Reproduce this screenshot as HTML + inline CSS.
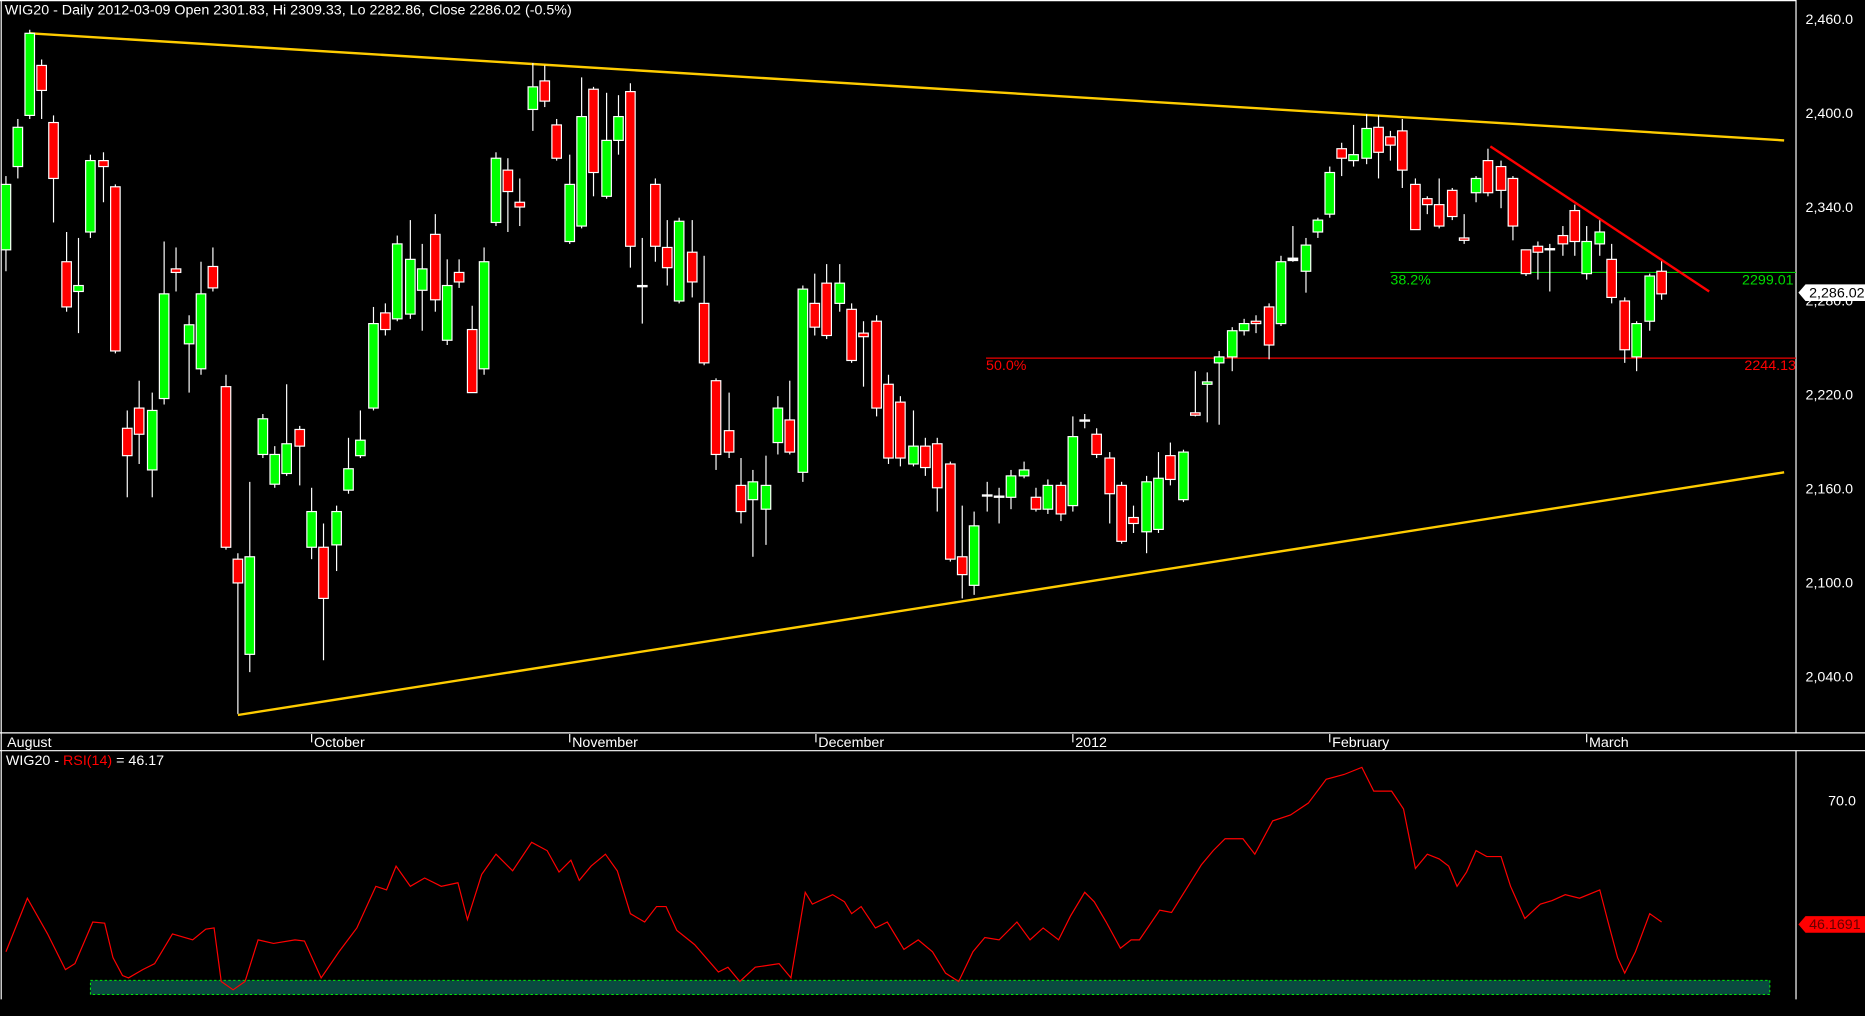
<!DOCTYPE html>
<html><head><meta charset="utf-8"><style>
html,body{margin:0;padding:0;background:#000;width:1865px;height:1016px;overflow:hidden}
svg{display:block}
text{font-family:"Liberation Sans",sans-serif}
</style></head><body>
<svg width="1865" height="1016" viewBox="0 0 1568 854" preserveAspectRatio="none" xmlns="http://www.w3.org/2000/svg">
<rect width="1568" height="854" fill="#000"/>
<g stroke="#fff" stroke-width="1" fill="none">
<line x1="1" y1="0" x2="1" y2="840"/>
<line x1="0" y1="0.5" x2="1510" y2="0.5"/>
<line x1="1510" y1="0" x2="1510" y2="616"/>
<line x1="0" y1="616" x2="1568" y2="616"/>
<line x1="0" y1="631" x2="1568" y2="631"/>
<line x1="1510" y1="631" x2="1510" y2="840"/>
<line x1="262" y1="617" x2="262" y2="624"/><line x1="479" y1="617" x2="479" y2="624"/><line x1="686" y1="617" x2="686" y2="624"/><line x1="902" y1="617" x2="902" y2="624"/><line x1="1118" y1="617" x2="1118" y2="624"/><line x1="1334" y1="617" x2="1334" y2="624"/>
</g>
<g font-size="12" fill="#fff">
<text x="4" y="12">WIG20 - Daily 2012-03-09 Open 2301.83, Hi 2309.33, Lo 2282.86, Close 2286.02 (-0.5%)</text>
<text x="6" y="628">August</text><text x="264" y="628">October</text><text x="481" y="628">November</text><text x="688" y="628">December</text><text x="904" y="628">2012</text><text x="1120" y="628">February</text><text x="1336" y="628">March</text>
<text x="1518" y="20">2,460.0</text><text x="1518" y="99">2,400.0</text><text x="1518" y="178">2,340.0</text><text x="1518" y="257">2,280.0</text><text x="1518" y="336">2,220.0</text><text x="1518" y="415">2,160.0</text><text x="1518" y="494">2,100.0</text><text x="1518" y="573">2,040.0</text>
<text x="1537" y="677">70.0</text>
<text x="5" y="643">WIG20 - <tspan fill="#ff0000">RSI(14)</tspan> = 46.17</text>
</g>
<!-- trend lines -->
<line x1="25" y1="28" x2="1500" y2="118" stroke="#ffcc00" stroke-width="2"/>
<line x1="200" y1="601" x2="1500" y2="397" stroke="#ffcc00" stroke-width="2"/>
<line x1="1169" y1="229" x2="1510" y2="229" stroke="#00cc00" stroke-width="1"/>
<line x1="829" y1="301" x2="1510" y2="301" stroke="#ee0000" stroke-width="1"/>
<text x="1169" y="239" font-size="12" fill="#00dd00">38.2%</text>
<text x="1508" y="239" font-size="12" fill="#00dd00" text-anchor="end">2299.01</text>
<text x="829" y="311" font-size="12" fill="#ff0000">50.0%</text>
<text x="1510" y="311" font-size="12" fill="#ff0000" text-anchor="end">2244.13</text>
<!-- candles -->
<g stroke="#fff" stroke-width="1">
<line x1="5" y1="148" x2="5" y2="228"/><rect x="1" y="155" width="8" height="55" fill="#00ff00"/>
<line x1="15" y1="100" x2="15" y2="150"/><rect x="11" y="107" width="8" height="33" fill="#00ff00"/>
<line x1="25" y1="25" x2="25" y2="100"/><rect x="21" y="28" width="8" height="69" fill="#00ff00"/>
<line x1="35" y1="50" x2="35" y2="100"/><rect x="31" y="55" width="8" height="21" fill="#ff0000"/>
<line x1="45" y1="97" x2="45" y2="187"/><rect x="41" y="103" width="8" height="47" fill="#ff0000"/>
<line x1="56" y1="195" x2="56" y2="262"/><rect x="52" y="220" width="8" height="38" fill="#ff0000"/>
<line x1="66" y1="200" x2="66" y2="280"/><rect x="62" y="240" width="8" height="5" fill="#00ff00"/>
<line x1="76" y1="130" x2="76" y2="200"/><rect x="72" y="135" width="8" height="60" fill="#00ff00"/>
<line x1="87" y1="128" x2="87" y2="170"/><rect x="83" y="135" width="8" height="5" fill="#ff0000"/>
<line x1="97" y1="155" x2="97" y2="297"/><rect x="93" y="157" width="8" height="138" fill="#ff0000"/>
<line x1="107" y1="345" x2="107" y2="418"/><rect x="103" y="360" width="8" height="23" fill="#ff0000"/>
<line x1="117" y1="320" x2="117" y2="390"/><rect x="113" y="343" width="8" height="22" fill="#ff0000"/>
<line x1="128" y1="330" x2="128" y2="418"/><rect x="124" y="345" width="8" height="50" fill="#00ff00"/>
<line x1="138" y1="203" x2="138" y2="340"/><rect x="134" y="247" width="8" height="88" fill="#00ff00"/>
<line x1="148" y1="208" x2="148" y2="245"/><rect x="144" y="226" width="8" height="3" fill="#ff0000"/>
<line x1="159" y1="265" x2="159" y2="330"/><rect x="155" y="273" width="8" height="16" fill="#00ff00"/>
<line x1="169" y1="220" x2="169" y2="315"/><rect x="165" y="247" width="8" height="63" fill="#00ff00"/>
<line x1="179" y1="208" x2="179" y2="245"/><rect x="175" y="224" width="8" height="18" fill="#ff0000"/>
<line x1="190" y1="315" x2="190" y2="462"/><rect x="186" y="325" width="8" height="135" fill="#ff0000"/>
<line x1="200" y1="465" x2="200" y2="600"/><rect x="196" y="470" width="8" height="20" fill="#ff0000"/>
<line x1="210" y1="405" x2="210" y2="565"/><rect x="206" y="468" width="8" height="82" fill="#00ff00"/>
<line x1="221" y1="348" x2="221" y2="385"/><rect x="217" y="352" width="8" height="30" fill="#00ff00"/>
<line x1="231" y1="375" x2="231" y2="410"/><rect x="227" y="382" width="8" height="25" fill="#00ff00"/>
<line x1="241" y1="323" x2="241" y2="400"/><rect x="237" y="373" width="8" height="25" fill="#00ff00"/>
<line x1="252" y1="358" x2="252" y2="408"/><rect x="248" y="361" width="8" height="14" fill="#ff0000"/>
<line x1="262" y1="410" x2="262" y2="470"/><rect x="258" y="430" width="8" height="30" fill="#00ff00"/>
<line x1="272" y1="440" x2="272" y2="555"/><rect x="268" y="460" width="8" height="43" fill="#ff0000"/>
<line x1="283" y1="425" x2="283" y2="480"/><rect x="279" y="430" width="8" height="28" fill="#00ff00"/>
<line x1="293" y1="368" x2="293" y2="415"/><rect x="289" y="394" width="8" height="18" fill="#00ff00"/>
<line x1="303" y1="345" x2="303" y2="385"/><rect x="299" y="370" width="8" height="13" fill="#00ff00"/>
<line x1="314" y1="258" x2="314" y2="345"/><rect x="310" y="272" width="8" height="71" fill="#00ff00"/>
<line x1="324" y1="255" x2="324" y2="282"/><rect x="320" y="263" width="8" height="14" fill="#ff0000"/>
<line x1="334" y1="198" x2="334" y2="270"/><rect x="330" y="205" width="8" height="63" fill="#00ff00"/>
<line x1="345" y1="185" x2="345" y2="268"/><rect x="341" y="218" width="8" height="46" fill="#00ff00"/>
<line x1="355" y1="205" x2="355" y2="278"/><rect x="351" y="226" width="8" height="18" fill="#00ff00"/>
<line x1="366" y1="180" x2="366" y2="262"/><rect x="362" y="197" width="8" height="55" fill="#ff0000"/>
<line x1="376" y1="218" x2="376" y2="290"/><rect x="372" y="240" width="8" height="46" fill="#00ff00"/>
<line x1="386" y1="218" x2="386" y2="242"/><rect x="382" y="229" width="8" height="8" fill="#ff0000"/>
<line x1="397" y1="257" x2="397" y2="330"/><rect x="393" y="277" width="8" height="53" fill="#ff0000"/>
<line x1="407" y1="208" x2="407" y2="315"/><rect x="403" y="220" width="8" height="90" fill="#00ff00"/>
<line x1="417" y1="128" x2="417" y2="190"/><rect x="413" y="133" width="8" height="54" fill="#00ff00"/>
<line x1="427" y1="133" x2="427" y2="195"/><rect x="423" y="143" width="8" height="18" fill="#ff0000"/>
<line x1="437" y1="150" x2="437" y2="190"/><rect x="433" y="170" width="8" height="4" fill="#ff0000"/>
<line x1="448" y1="53" x2="448" y2="110"/><rect x="444" y="73" width="8" height="19" fill="#00ff00"/>
<line x1="458" y1="55" x2="458" y2="90"/><rect x="454" y="68" width="8" height="17" fill="#ff0000"/>
<line x1="468" y1="100" x2="468" y2="135"/><rect x="464" y="105" width="8" height="28" fill="#ff0000"/>
<line x1="479" y1="130" x2="479" y2="205"/><rect x="475" y="155" width="8" height="48" fill="#00ff00"/>
<line x1="489" y1="65" x2="489" y2="192"/><rect x="485" y="98" width="8" height="92" fill="#00ff00"/>
<line x1="499" y1="73" x2="499" y2="165"/><rect x="495" y="75" width="8" height="70" fill="#ff0000"/>
<line x1="510" y1="78" x2="510" y2="167"/><rect x="506" y="118" width="8" height="47" fill="#00ff00"/>
<line x1="520" y1="80" x2="520" y2="130"/><rect x="516" y="98" width="8" height="20" fill="#00ff00"/>
<line x1="530" y1="70" x2="530" y2="225"/><rect x="526" y="77" width="8" height="130" fill="#ff0000"/>
<line x1="540" y1="200" x2="540" y2="272"/><rect x="536" y="240" width="8" height="1" fill="#fff"/>
<line x1="551" y1="150" x2="551" y2="220"/><rect x="547" y="155" width="8" height="52" fill="#ff0000"/>
<line x1="561" y1="185" x2="561" y2="240"/><rect x="557" y="208" width="8" height="17" fill="#ff0000"/>
<line x1="571" y1="183" x2="571" y2="255"/><rect x="567" y="186" width="8" height="67" fill="#00ff00"/>
<line x1="582" y1="185" x2="582" y2="250"/><rect x="578" y="212" width="8" height="25" fill="#ff0000"/>
<line x1="592" y1="215" x2="592" y2="307"/><rect x="588" y="255" width="8" height="50" fill="#ff0000"/>
<line x1="602" y1="318" x2="602" y2="395"/><rect x="598" y="320" width="8" height="62" fill="#ff0000"/>
<line x1="613" y1="330" x2="613" y2="385"/><rect x="609" y="362" width="8" height="18" fill="#ff0000"/>
<line x1="623" y1="385" x2="623" y2="440"/><rect x="619" y="408" width="8" height="22" fill="#ff0000"/>
<line x1="633" y1="395" x2="633" y2="468"/><rect x="629" y="405" width="8" height="15" fill="#00ff00"/>
<line x1="644" y1="383" x2="644" y2="458"/><rect x="640" y="408" width="8" height="20" fill="#00ff00"/>
<line x1="654" y1="333" x2="654" y2="382"/><rect x="650" y="343" width="8" height="29" fill="#00ff00"/>
<line x1="664" y1="320" x2="664" y2="382"/><rect x="660" y="353" width="8" height="27" fill="#ff0000"/>
<line x1="675" y1="240" x2="675" y2="405"/><rect x="671" y="243" width="8" height="154" fill="#00ff00"/>
<line x1="685" y1="230" x2="685" y2="282"/><rect x="681" y="255" width="8" height="20" fill="#ff0000"/>
<line x1="695" y1="222" x2="695" y2="285"/><rect x="691" y="238" width="8" height="44" fill="#ff0000"/>
<line x1="706" y1="222" x2="706" y2="262"/><rect x="702" y="238" width="8" height="17" fill="#00ff00"/>
<line x1="716" y1="255" x2="716" y2="305"/><rect x="712" y="260" width="8" height="43" fill="#ff0000"/>
<line x1="726" y1="270" x2="726" y2="325"/><rect x="722" y="280" width="8" height="3" fill="#ff0000"/>
<line x1="737" y1="265" x2="737" y2="350"/><rect x="733" y="270" width="8" height="73" fill="#ff0000"/>
<line x1="747" y1="315" x2="747" y2="390"/><rect x="743" y="323" width="8" height="62" fill="#ff0000"/>
<line x1="757" y1="333" x2="757" y2="392"/><rect x="753" y="338" width="8" height="47" fill="#ff0000"/>
<line x1="768" y1="345" x2="768" y2="392"/><rect x="764" y="375" width="8" height="15" fill="#00ff00"/>
<line x1="778" y1="368" x2="778" y2="400"/><rect x="774" y="375" width="8" height="18" fill="#ff0000"/>
<line x1="788" y1="368" x2="788" y2="430"/><rect x="784" y="373" width="8" height="37" fill="#ff0000"/>
<line x1="799" y1="388" x2="799" y2="472"/><rect x="795" y="390" width="8" height="80" fill="#ff0000"/>
<line x1="809" y1="425" x2="809" y2="503"/><rect x="805" y="468" width="8" height="15" fill="#ff0000"/>
<line x1="819" y1="430" x2="819" y2="500"/><rect x="815" y="442" width="8" height="50" fill="#00ff00"/>
<line x1="830" y1="405" x2="830" y2="430"/><rect x="826" y="416" width="8" height="1" fill="#fff"/>
<line x1="840" y1="410" x2="840" y2="440"/><rect x="836" y="417" width="8" height="1" fill="#fff"/>
<line x1="850" y1="395" x2="850" y2="428"/><rect x="846" y="400" width="8" height="18" fill="#00ff00"/>
<line x1="861" y1="388" x2="861" y2="402"/><rect x="857" y="395" width="8" height="5" fill="#00ff00"/>
<line x1="871" y1="410" x2="871" y2="430"/><rect x="867" y="418" width="8" height="10" fill="#ff0000"/>
<line x1="881" y1="403" x2="881" y2="432"/><rect x="877" y="408" width="8" height="20" fill="#00ff00"/>
<line x1="892" y1="405" x2="892" y2="438"/><rect x="888" y="408" width="8" height="24" fill="#ff0000"/>
<line x1="902" y1="350" x2="902" y2="430"/><rect x="898" y="367" width="8" height="58" fill="#00ff00"/>
<line x1="912" y1="348" x2="912" y2="360"/><rect x="908" y="353" width="8" height="1" fill="#fff"/>
<line x1="922" y1="360" x2="922" y2="385"/><rect x="918" y="365" width="8" height="17" fill="#ff0000"/>
<line x1="933" y1="380" x2="933" y2="440"/><rect x="929" y="385" width="8" height="30" fill="#ff0000"/>
<line x1="943" y1="405" x2="943" y2="457"/><rect x="939" y="408" width="8" height="47" fill="#ff0000"/>
<line x1="953" y1="425" x2="953" y2="448"/><rect x="949" y="435" width="8" height="5" fill="#ff0000"/>
<line x1="964" y1="400" x2="964" y2="465"/><rect x="960" y="405" width="8" height="42" fill="#00ff00"/>
<line x1="974" y1="380" x2="974" y2="448"/><rect x="970" y="402" width="8" height="43" fill="#00ff00"/>
<line x1="984" y1="372" x2="984" y2="408"/><rect x="980" y="383" width="8" height="20" fill="#ff0000"/>
<line x1="995" y1="378" x2="995" y2="422"/><rect x="991" y="380" width="8" height="40" fill="#00ff00"/>
<line x1="1005" y1="312" x2="1005" y2="350"/><rect x="1001" y="347" width="8" height="2" fill="#ff0000"/>
<line x1="1015" y1="313" x2="1015" y2="355"/><rect x="1011" y="321" width="8" height="2" fill="#00ff00"/>
<line x1="1025" y1="295" x2="1025" y2="357"/><rect x="1021" y="300" width="8" height="5" fill="#00ff00"/>
<line x1="1036" y1="275" x2="1036" y2="312"/><rect x="1032" y="278" width="8" height="22" fill="#00ff00"/>
<line x1="1046" y1="268" x2="1046" y2="282"/><rect x="1042" y="272" width="8" height="6" fill="#00ff00"/>
<line x1="1056" y1="265" x2="1056" y2="280"/><rect x="1052" y="270" width="8" height="2" fill="#ff0000"/>
<line x1="1067" y1="255" x2="1067" y2="302"/><rect x="1063" y="258" width="8" height="32" fill="#ff0000"/>
<line x1="1077" y1="215" x2="1077" y2="274"/><rect x="1073" y="220" width="8" height="52" fill="#00ff00"/>
<line x1="1087" y1="190" x2="1087" y2="220"/><rect x="1083" y="217" width="8" height="2" fill="#fff"/>
<line x1="1098" y1="200" x2="1098" y2="246"/><rect x="1094" y="206" width="8" height="22" fill="#00ff00"/>
<line x1="1108" y1="183" x2="1108" y2="200"/><rect x="1104" y="185" width="8" height="10" fill="#00ff00"/>
<line x1="1118" y1="140" x2="1118" y2="183"/><rect x="1114" y="145" width="8" height="35" fill="#00ff00"/>
<line x1="1128" y1="120" x2="1128" y2="148"/><rect x="1124" y="125" width="8" height="8" fill="#ff0000"/>
<line x1="1138" y1="105" x2="1138" y2="140"/><rect x="1134" y="130" width="8" height="5" fill="#00ff00"/>
<line x1="1149" y1="96" x2="1149" y2="138"/><rect x="1145" y="108" width="8" height="25" fill="#00ff00"/>
<line x1="1159" y1="97" x2="1159" y2="150"/><rect x="1155" y="107" width="8" height="21" fill="#ff0000"/>
<line x1="1169" y1="110" x2="1169" y2="135"/><rect x="1165" y="115" width="8" height="7" fill="#ff0000"/>
<line x1="1179" y1="100" x2="1179" y2="158"/><rect x="1175" y="110" width="8" height="33" fill="#ff0000"/>
<line x1="1190" y1="150" x2="1190" y2="193"/><rect x="1186" y="155" width="8" height="38" fill="#ff0000"/>
<line x1="1200" y1="165" x2="1200" y2="180"/><rect x="1196" y="167" width="8" height="5" fill="#ff0000"/>
<line x1="1210" y1="150" x2="1210" y2="192"/><rect x="1206" y="172" width="8" height="18" fill="#ff0000"/>
<line x1="1221" y1="158" x2="1221" y2="185"/><rect x="1217" y="160" width="8" height="22" fill="#ff0000"/>
<line x1="1231" y1="180" x2="1231" y2="205"/><rect x="1227" y="200" width="8" height="2" fill="#ff0000"/>
<line x1="1241" y1="148" x2="1241" y2="170"/><rect x="1237" y="150" width="8" height="12" fill="#00ff00"/>
<line x1="1251" y1="125" x2="1251" y2="165"/><rect x="1247" y="135" width="8" height="27" fill="#ff0000"/>
<line x1="1262" y1="135" x2="1262" y2="175"/><rect x="1258" y="140" width="8" height="20" fill="#ff0000"/>
<line x1="1272" y1="148" x2="1272" y2="202"/><rect x="1268" y="150" width="8" height="40" fill="#ff0000"/>
<line x1="1283" y1="210" x2="1283" y2="232"/><rect x="1279" y="210" width="8" height="20" fill="#ff0000"/>
<line x1="1293" y1="203" x2="1293" y2="235"/><rect x="1289" y="207" width="8" height="5" fill="#ff0000"/>
<line x1="1303" y1="205" x2="1303" y2="245"/><rect x="1299" y="209" width="8" height="1" fill="#fff"/>
<line x1="1314" y1="190" x2="1314" y2="215"/><rect x="1310" y="198" width="8" height="7" fill="#ff0000"/>
<line x1="1324" y1="172" x2="1324" y2="215"/><rect x="1320" y="177" width="8" height="26" fill="#ff0000"/>
<line x1="1334" y1="190" x2="1334" y2="235"/><rect x="1330" y="203" width="8" height="27" fill="#00ff00"/>
<line x1="1345" y1="185" x2="1345" y2="215"/><rect x="1341" y="195" width="8" height="10" fill="#00ff00"/>
<line x1="1355" y1="205" x2="1355" y2="255"/><rect x="1351" y="218" width="8" height="32" fill="#ff0000"/>
<line x1="1366" y1="250" x2="1366" y2="305"/><rect x="1362" y="253" width="8" height="41" fill="#ff0000"/>
<line x1="1376" y1="270" x2="1376" y2="312"/><rect x="1372" y="272" width="8" height="28" fill="#00ff00"/>
<line x1="1387" y1="230" x2="1387" y2="278"/><rect x="1383" y="232" width="8" height="38" fill="#00ff00"/>
<line x1="1397" y1="218" x2="1397" y2="252"/><rect x="1393" y="228" width="8" height="19" fill="#ff0000"/>
</g>
<line x1="1253" y1="123" x2="1437" y2="245" stroke="#ff0000" stroke-width="2"/>
<!-- price tag -->
<polygon points="1512,246 1518,239 1568,239 1568,253 1518,253" fill="#fff"/>
<text x="1521" y="250" font-size="12" fill="#000">2,286.02</text>
<!-- RSI -->
<rect x="76" y="824" width="1412" height="12" fill="#0a4a40" stroke="#00ff00" stroke-width="0.8" stroke-dasharray="2,2"/>
<polyline fill="none" stroke="#ff0000" stroke-width="1" points="5,800 23,755 40,785 55,815 63,810 78,775 88,776 95,805 103,820 108,822 120,815 130,810 145,785 162,790 173,781 180,780 186,825 196,832 206,825 217,790 230,793 248,790 256,791 270,822 285,800 300,780 316,745 325,748 333,728 345,745 357,738 371,745 385,742 393,773 405,735 417,718 431,732 447,708 460,715 470,733 480,723 487,740 497,728 509,718 519,732 530,768 542,775 552,762 560,762 569,782 584,794 604,817 612,813 622,825 635,813 655,810 665,822 677,750 683,760 700,752 710,758 716,768 724,762 736,780 746,775 760,798 772,790 784,800 795,818 806,825 818,800 828,788 840,790 855,775 866,790 877,780 890,790 900,770 912,750 920,758 930,775 942,797 951,790 958,790 975,765 985,767 1000,743 1010,727 1020,715 1030,705 1045,705 1055,718 1070,690 1085,685 1100,675 1115,655 1130,651 1145,645 1155,665 1170,665 1180,680 1190,730 1200,718 1210,722 1218,728 1225,745 1233,733 1241,715 1250,720 1262,720 1270,745 1282,772 1295,760 1305,757 1316,752 1328,755 1345,748 1352,775 1360,805 1366,818 1375,800 1387,768 1397,775"/>
<polygon points="1512,777 1518,770 1568,770 1568,784 1518,784" fill="#ff0000"/>
<text x="1521" y="781" font-size="12" fill="#660000">46.1691</text>
</svg>
</body></html>
